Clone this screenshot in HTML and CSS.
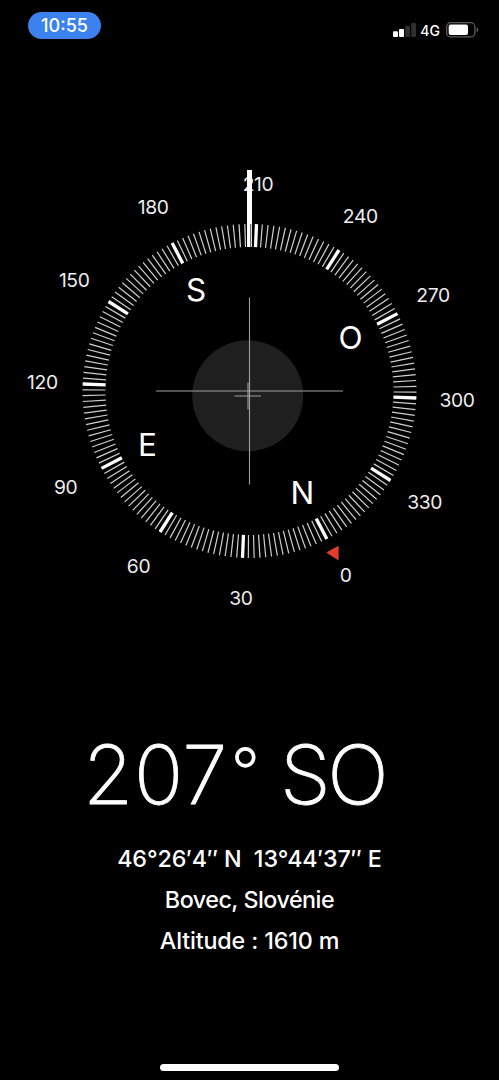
FILE: index.html
```html
<!DOCTYPE html>
<html lang="fr">
<head>
<meta charset="utf-8">
<title>Boussole</title>
<link rel="stylesheet" href="styles.css">
</head>
<body>
<main class="screen">
  <header class="status">
    <span class="clock">10:55</span>
    <div class="indicators">
      <svg class="signal" width="23" height="14" viewBox="0 0 23 14">
        <rect class="on" x="0" y="8.3" width="5" height="5.7" rx="1"/>
        <rect class="on" x="6" y="6" width="5" height="8" rx="1"/>
        <rect class="off" x="12.2" y="3" width="4.8" height="11" rx="1"/>
        <rect class="off" x="18.2" y="0" width="4.8" height="14" rx="1"/>
      </svg>
      <span class="network">4G</span>
      <svg class="battery" width="33" height="16" viewBox="0 0 33 16">
        <rect class="shell" x=".7" y=".7" width="28.2" height="14.2" rx="4"/>
        <rect class="on" x="2.7" y="2.6" width="19.3" height="10.4" rx="2"/>
        <path class="cap" d="M30.6 5.4q1.7.8 1.7 2.4t-1.7 2.4z"/>
      </svg>
    </div>
  </header>

  <svg class="compass" width="499" height="460" viewBox="0 160 499 460">
    <circle class="level" cx="247.7" cy="395.8" r="55.5"/>
    <g id="ticks"></g>
    <g class="degrees">
      <text x="258" y="190.6">210</text>
      <text x="360.3" y="222.5">240</text>
      <text x="433" y="301.5">270</text>
      <text x="457" y="406.5">300</text>
      <text x="424.7" y="508.6">330</text>
      <text x="345.7" y="581.5">0</text>
      <text x="241" y="604.8">30</text>
      <text x="138.5" y="572.8">60</text>
      <text x="65.7" y="493.8">90</text>
      <text x="42.4" y="389">120</text>
      <text x="74.2" y="286.8">150</text>
      <text x="153.2" y="214">180</text>
    </g>
    <g class="cardinals">
      <text x="196" y="300.6">S</text>
      <text x="350.5" y="349.3">O</text>
      <text x="302.3" y="503.6">N</text>
      <text x="147.5" y="455.6">E</text>
    </g>
    <rect class="needle" x="247" y="170" width="5" height="77"/>
    <path class="edge" d="M250.7 224v23"/>
    <path class="cross" d="M249.5 297.5V484.5M156 391H343"/>
    <path class="cross" d="M248 382.5V409.5M234.5 396H261"/>
    <path class="north" d="M326.3 552.4L338.6 545.7V560.5z"/>
  </svg>

  <section class="readout">
    <h1 class="heading"><span class="angle">207<span class="degree">°</span></span><span class="direction">SO</span></h1>
    <p class="coords">46°26′4″ N&nbsp; 13°44′37″ E</p>
    <p class="place">Bovec, Slovénie</p>
    <p class="altitude">Altitude : 1610 m</p>
  </section>
  <div class="home"></div>
</main>
<script src="dial.js"></script>
</body>
</html>
```
FILE: styles.css
```css
body {
  margin: 0;
  background: #000;
  color: #fff;
  font-family: Inter, "Liberation Sans", sans-serif;
}
.screen {
  display: flex;
  flex-direction: column;
  width: 499px;
  height: 1080px;
  overflow: hidden;
}
.status {
  display: flex;
  justify-content: space-between;
  box-sizing: border-box;
  height: 160px;
  padding: 12px 20px 0 28px;
}
.clock {
  width: 73px;
  height: 26.5px;
  border-radius: 14px;
  background: #3b82ef;
  font-size: 18px;
  font-weight: 500;
  line-height: 27px;
  text-align: center;
}
.indicators {
  display: flex;
  align-items: center;
  height: 36px;
}
.network {
  margin: 1px 6px 0 4px;
  font-size: 14px;
  font-weight: 500;
}
.on { fill: #fff; }
.off { fill: #303030; }
.shell { fill: none; stroke: #5b5b5b; stroke-width: 1.3; }
.cap { fill: #666; }
.compass { display: block; flex: none; }
.level { fill: #1f1f1f; }
.minor { stroke: #d0d0d0; stroke-width: 1.2; }
.major { stroke: #fff; stroke-width: 3.3; }
.degrees, .cardinals { text-anchor: middle; }
.degrees { fill: #ececec; font-size: 19.3px; letter-spacing: -.4px; }
.cardinals { fill: #fff; font-size: 31.5px; }
.needle { fill: #fff; }
.edge { stroke: #444; stroke-width: 1; }
.cross { stroke: #a0a0a0; stroke-width: 1.1; }
.north { fill: #e63c2d; }
.readout {
  display: flex;
  flex-direction: column;
  align-items: center;
  height: 444px;
  padding-top: 104px;
  box-sizing: border-box;
}
.heading {
  display: flex;
  align-self: flex-start;
  box-sizing: border-box;
  height: 102px;
  margin: 0 0 12px;
  padding-left: 83px;
  font-size: 81.5px;
  font-weight: 200;
  line-height: 102px;
  -webkit-text-stroke: .8px #fff;
}
.angle { width: 197px; letter-spacing: .6px; }
.degree {
  margin-left: 3px;
  font-size: 64px;
  font-weight: 300;
  line-height: 1;
  vertical-align: 10px;
  -webkit-text-stroke: 0;
}
.direction { letter-spacing: -3.5px; }
.readout p {
  margin: 0;
  font-size: 23.3px;
  font-weight: 500;
  line-height: 41px;
  white-space: nowrap;
}
.readout .coords { letter-spacing: -.1px; }
.readout .place { letter-spacing: -.5px; }
.readout .altitude { letter-spacing: -.15px; }
.home {
  align-self: center;
  width: 179px;
  height: 6.5px;
  border-radius: 4px;
  background: #fff;
}
```
FILE: dial.js
```javascript
const HEADING = 207.6;
const CENTER = { x: 249.5, y: 391 };
const dial = document.getElementById("ticks");

for (let deg = 0; deg < 360; deg += 2) {
  const line = document.createElementNS("http://www.w3.org/2000/svg", "line");
  line.setAttribute("x1", CENTER.x);
  line.setAttribute("x2", CENTER.x);
  line.setAttribute("y1", CENTER.y - 167);
  line.setAttribute("y2", CENTER.y - 144);
  line.setAttribute("class", deg % 30 === 0 ? "major" : "minor");
  line.setAttribute("transform", `rotate(${deg - HEADING} ${CENTER.x} ${CENTER.y})`);
  dial.appendChild(line);
}
```
